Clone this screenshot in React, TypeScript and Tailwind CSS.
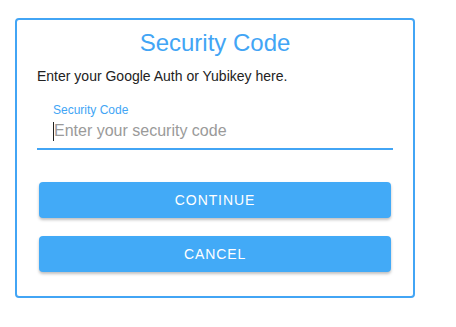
import React from "react";

export default function App() {
  return (
    <div className="min-h-screen bg-white pl-[15px] pt-[18px] font-['Liberation_Sans',Arial,sans-serif]">
      <div className="w-[400px] h-[280px] rounded-[4px] border-2 border-[#42a5f5] px-5">
        {/* Titulo */}
        <h1 className="pt-[9px] text-center text-[24px] leading-[28px] text-[#42a5f5]">Security Code</h1>
        <p className="mt-[9px] text-[14px] leading-[20px] text-[#222]">Enter your Google Auth or Yubikey here.</p>

        {/* Campo */}
        <div className="mt-[16px] border-b-2 border-[#42a5f5] pb-[7px]">
          <label className="block pl-4 text-[12px] leading-[16px] text-[#42a5f5]">Security Code</label>
          <div className="relative mt-[3px] pl-4">
            <span className="absolute left-4 top-[1px] h-[19px] w-px bg-[#222]" />
            <input
              className="block w-full pl-px text-[16px] leading-[20px] h-5 outline-none placeholder:text-[#9a9a9a] bg-transparent"
              placeholder="Enter your security code"
            />
          </div>
        </div>

        {/* Botoes */}
        <div className="mt-8 flex flex-col gap-[18px] px-[2px]">
          <button className="h-9 rounded-[4px] bg-[#42aaf7] text-[14px] tracking-[0.9px] text-white shadow-[0_2px_3px_rgba(0,0,0,0.25)]">
            CONTINUE
          </button>
          <button className="h-9 rounded-[4px] bg-[#42aaf7] text-[14px] tracking-[0.9px] text-white shadow-[0_2px_3px_rgba(0,0,0,0.25)]">
            CANCEL
          </button>
        </div>
      </div>
    </div>
  );
}
